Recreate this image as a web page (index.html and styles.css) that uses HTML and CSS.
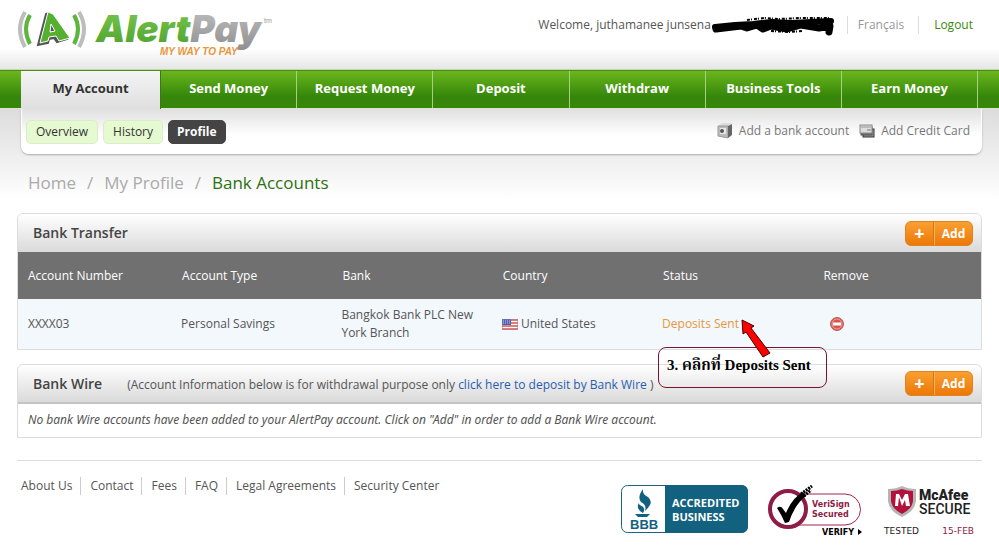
FILE: index.html
```html
<!DOCTYPE html>
<html lang="en">
<head>
  <meta charset="UTF-8">
  <title>AlertPay - Bank Accounts</title>
  <link rel="stylesheet" href="styles.css">
</head>
<body>
  <header class="header">
    <a href="#" class="logo">
      <svg width="260" height="54" viewBox="0 0 260 54" role="img" aria-label="AlertPay">
        <defs>
          <linearGradient id="green" x1="0" y1="0" x2="0" y2="1">
            <stop offset="0" stop-color="#7cc850"/>
            <stop offset="1" stop-color="#4aa02c"/>
          </linearGradient>
          <linearGradient id="grey" x1="0" y1="0" x2="0" y2="1">
            <stop offset="0" stop-color="#c0c0c0"/>
            <stop offset="1" stop-color="#8e8e8e"/>
          </linearGradient>
        </defs>
        <path d="M8 7Q-2 24 8 42" fill="none" stroke="#bdbdbd" stroke-width="4"/>
        <path d="M13 10Q5 24 13 39" fill="none" stroke="#5db53c" stroke-width="4"/>
        <path d="M62 7Q72 24 62 42" fill="none" stroke="#bdbdbd" stroke-width="4"/>
        <path d="M57 10Q65 24 57 39" fill="none" stroke="#5db53c" stroke-width="4"/>
        <path d="M29 9L32 8L50 34L40 37L37 33L32 34L31 38L21 40Z" fill="#555" stroke="#555" stroke-width="2"/>
        <path fill-rule="evenodd" d="M31 7L36 9L53 33L42 36L39 31L32 32L31 36L23 38ZM34 19L33 27L38 26Z" fill="#55b030" stroke="#fff" stroke-width="1"/>
        <text x="79" y="37" class="logo-name"><tspan fill="url(#green)">Alert</tspan><tspan fill="url(#grey)">Pay</tspan></text>
        <text x="143" y="50" class="logo-slogan">MY WAY TO PAY</text>
        <text x="247" y="18" class="logo-tm">tm</text>
      </svg>
    </a>
    <div class="user-bar">
      <span class="welcome">Welcome, juthamanee junsena
        <svg class="scribble" width="126" height="20" viewBox="0 0 126 20">
          <path d="M4 10L24 8L42 7L60 5L80 6L100 5L120 4" fill="none" stroke="#000" stroke-width="6" stroke-linecap="round"/>
          <path d="M5 12L30 9L36 11L46 8L52 12L60 9L76 12L90 8L108 11L119 9L118 15" fill="none" stroke="#000" stroke-width="7" stroke-linecap="round" stroke-linejoin="round"/>
          <path d="M36 3L44 2L54 1L68 2L90 1L118 1M60 14L78 15L92 14" fill="none" stroke="#000" stroke-width="2" stroke-dasharray="3 1 1 2"/>
        </svg>
      </span>
      <a href="#" class="language">Français</a>
      <a href="#" class="logout">Logout</a>
    </div>
  </header>

  <nav class="main-nav">
    <a href="#" class="nav-item active">My Account</a>
    <a href="#" class="nav-item">Send Money</a>
    <a href="#" class="nav-item">Request Money</a>
    <a href="#" class="nav-item">Deposit</a>
    <a href="#" class="nav-item">Withdraw</a>
    <a href="#" class="nav-item">Business Tools</a>
    <a href="#" class="nav-item">Earn Money</a>
  </nav>

  <div class="page">
    <div class="sub-nav">
      <div class="tabs">
        <a href="#" class="tab">Overview</a>
        <a href="#" class="tab">History</a>
        <a href="#" class="tab active">Profile</a>
      </div>
      <div class="shortcuts">
        <a href="#">
          <svg width="16" height="16" viewBox="0 0 16 16">
            <path d="M1 3L5 0H15L11 3Z" fill="#ddd"/>
            <path d="M1 3H11V15L1 13Z" fill="#bbb" stroke="#999"/>
            <path d="M11 3L15 1V12L11 15Z" fill="#666"/>
            <rect x="3" y="5" width="6" height="6" fill="#e8e8e8"/>
            <circle cx="5" cy="8" r="2" fill="#555"/>
          </svg>
          Add a bank account
        </a>
        <a href="#">
          <svg width="16" height="14" viewBox="0 0 16 14">
            <rect x="4" y="5" width="11" height="8" fill="#999" stroke="#333"/>
            <rect x="2" y="3" width="11" height="8" fill="#777" stroke="#555"/>
            <rect x="1" y="1" width="12" height="8" fill="#ddd" stroke="#888"/>
            <path d="M2 3H12" stroke="#999"/>
            <rect x="8" y="5" width="4" height="2" fill="#aaa"/>
          </svg>
          Add Credit Card
        </a>
      </div>
    </div>

    <div class="breadcrumb">
      <a href="#">Home</a>
      <span>/</span>
      <a href="#">My Profile</a>
      <span>/</span>
      <h1>Bank Accounts</h1>
    </div>

    <main class="content">
      <section class="panel">
        <div class="panel-head">
          <h2>Bank Transfer</h2>
          <button type="button" class="add-button"><span class="plus">+</span><span class="label">Add</span></button>
        </div>
        <table class="accounts">
          <thead>
            <tr>
              <th class="first">Account Number</th>
              <th>Account Type</th>
              <th>Bank</th>
              <th>Country</th>
              <th>Status</th>
              <th class="last">Remove</th>
            </tr>
          </thead>
          <tbody>
            <tr>
              <td>XXXX03</td>
              <td>Personal Savings</td>
              <td>Bangkok Bank PLC New York Branch</td>
              <td>
                <svg class="flag" width="16" height="11" viewBox="0 0 16 11">
                  <rect width="16" height="11" fill="#fff"/>
                  <path d="M0 1H16M0 4H16M0 7H16M0 10H16" stroke="#d9534a" stroke-width="1.5"/>
                  <rect width="9" height="6" fill="#4a63b5"/>
                  <path d="M1 2H9M1 4H9" stroke="#c5cdf0" stroke-dasharray="1 1"/>
                  <rect x=".5" y=".5" width="15" height="10" fill="none" stroke="#8a7fae" stroke-opacity=".5"/>
                </svg>
                United States
              </td>
              <td class="status">
                <a href="#">Deposits Sent</a>
                <div class="callout">3. คลิกที่ Deposits Sent</div>
                <svg class="arrow" width="30" height="40" viewBox="0 0 30 40">
                  <path d="M1 1L13 7L10 9L29 34L22 38L5 13L2 15Z" fill="#f00" stroke="#400"/>
                </svg>
              </td>
              <td>
                <button type="button" class="remove" aria-label="Remove">
                  <svg width="14" height="14" viewBox="0 0 14 14">
                    <circle cx="7" cy="7" r="6.5" fill="#d9534f" stroke="#b9625c"/>
                    <circle cx="7" cy="7" r="5" fill="none" stroke="#f0a09a"/>
                    <rect x="3" y="5.5" width="8" height="3" fill="#fff"/>
                  </svg>
                </button>
              </td>
            </tr>
          </tbody>
        </table>
      </section>

      <section class="panel">
        <div class="panel-head wire">
          <h2>Bank Wire</h2>
          <p>(Account Information below is for withdrawal purpose only <a href="#">click here to deposit by Bank Wire</a> )</p>
          <button type="button" class="add-button"><span class="plus">+</span><span class="label">Add</span></button>
        </div>
        <p class="empty">No bank Wire accounts have been added to your AlertPay account. Click on "Add" in order to add a Bank Wire account.</p>
      </section>
    </main>

    <footer class="footer">
      <div class="footer-links">
        <a href="#">About Us</a>
        <a href="#">Contact</a>
        <a href="#">Fees</a>
        <a href="#">FAQ</a>
        <a href="#">Legal Agreements</a>
        <a href="#">Security Center</a>
      </div>
      <div class="seals">
        <svg width="127" height="48" viewBox="0 0 127 48">
          <rect x=".5" y=".5" width="126" height="47" rx="6" fill="#fff" stroke="#1b6480"/>
          <path d="M44 0H120Q127 0 127 7V41Q127 48 120 48H44Z" fill="#12627f"/>
          <path d="M22 4Q21 9 27 12Q33 17 26 24L24 26Q26 20 20 17Q16 12 22 4ZM18 17Q17 20 21 21Q25 24 22 28Q16 25 17 20Z" fill="#12627f"/>
          <path d="M14 29H29L26 32H17Z" fill="#12627f"/>
          <text x="9" y="44" class="bbb">BBB</text>
          <text x="51" y="22" class="seal-title">ACCREDITED</text>
          <text x="51" y="36" class="seal-title">BUSINESS</text>
        </svg>
        <svg width="96" height="56" viewBox="0 0 96 56">
          <path d="M30 9H77A15 15 0 0 1 77 40H30" fill="#fff" stroke="#a5234f"/>
          <circle cx="20" cy="24" r="18" fill="#fff" stroke="#8d1c46" stroke-width="4"/>
          <path d="M9 23Q13 20 15 24L18 28Q24 13 35 7L38 11Q27 19 21 37L17 38Q13 29 9 23Z" fill="#000"/>
          <path d="M33 9L44 1M36 11L43 5" fill="none" stroke="#000" stroke-width="3" stroke-dasharray="2 1"/>
          <text x="44" y="22" class="verisign">VeriSign</text>
          <text x="44" y="32" class="verisign">Secured</text>
          <text x="54" y="50" class="verify">VERIFY</text>
          <path d="M90 44L94 47L90 50Z" fill="#000"/>
        </svg>
        <div class="mcafee">
          <svg width="90" height="34" viewBox="0 0 90 34">
            <path d="M4 4Q12 4 18 1Q24 4 32 4V16Q31 26 18 32Q5 26 4 16Z" fill="#b5b5b5"/>
            <path d="M7 6Q13 6 18 4Q23 6 29 6V16Q28 24 18 29Q8 24 7 16Z" fill="#b3123c"/>
            <path d="M11 21L12 9H15L18 15L21 9H24L26 21H22L21 15L18 21L15 12L14 21Z" fill="#fff"/>
            <text x="35" y="15" class="mcafee-name">McAfee</text>
            <text x="35" y="29" class="mcafee-secure">SECURE</text>
          </svg>
          <div class="tested"><span>TESTED</span><span class="date">15-FEB</span></div>
        </div>
      </div>
    </footer>
  </div>
</body>
</html>
```

FILE: styles.css
```css
* {
  box-sizing: border-box;
}
body {
  margin: 0;
  background: #fff;
  font-family: "Trebuchet MS", "Open Sans", "Noto Sans", sans-serif;
  font-size: 12px;
  line-height: 18px;
  color: #555;
}
a {
  color: inherit;
  text-decoration: none;
}
h1,
h2,
p {
  margin: 0;
}
button {
  padding: 0;
  border: none;
  background: none;
  font: inherit;
  cursor: pointer;
}

/* header */
.header {
  display: flex;
  justify-content: space-between;
  height: 70px;
  padding: 5px 26px 0 17px;
  background: linear-gradient(#fff 70%, #e6e6e6);
  border-bottom: 1px solid #c5d8b0;
}
.logo-name {
  font: italic 900 37px Inter, sans-serif;
}
.logo-slogan {
  font: italic 700 10px "Liberation Sans", sans-serif;
  fill: #e8963a;
}
.logo-tm {
  font: 7px "Liberation Sans", sans-serif;
  fill: #999;
}
.user-bar {
  display: flex;
  align-items: flex-start;
  padding-top: 11px;
}
.welcome {
  position: relative;
  margin-right: 136px;
}
.scribble {
  position: absolute;
  left: 100%;
  top: 1px;
}
.language {
  padding: 0 14px 0 10px;
  border-left: 1px solid #ddd;
  border-right: 1px solid #ddd;
  color: #999;
}
.logout {
  padding-left: 15px;
  color: #3a8a10;
}

/* main navigation */
.main-nav {
  display: flex;
  height: 39px;
  padding: 0 21px;
  background: linear-gradient(#6ab61c, #35860a 70%);
  border-top: 1px solid #4c8a1a;
  border-bottom: 1px solid #dce8cc;
}
.nav-item {
  flex: 1;
  padding-top: 8px;
  border-right: 1px solid #a8d080;
  color: #fff;
  font-size: 13px;
  font-weight: 700;
  text-align: center;
}
.nav-item.active {
  flex: 0 0 140px;
  height: 38px;
  background: linear-gradient(#f4f4f4, #dfdfdf);
  border-right-color: #3a7a10;
  color: #333;
}

.page {
  padding: 0 17px;
  background: linear-gradient(#dcdcdc, #fff 90px);
}
.sub-nav {
  display: flex;
  justify-content: space-between;
  align-items: flex-start;
  height: 45px;
  margin: 0 0 0 4px;
  padding: 11px 11px 0 4px;
  background: linear-gradient(#e0e0e0, #fff 26px);
  border: 1px solid #fff;
  border-top: none;
  border-radius: 0 0 8px 8px;
  box-shadow: 0 1px 2px #aaa;
}
.tabs {
  display: flex;
  gap: 5px;
}
.tab {
  padding: 2px 9px;
  background: #e6fad2;
  border: 1px solid #dcecc8;
  border-radius: 5px;
  line-height: 18px;
  color: #333;
}
.tab.active {
  padding: 2px 8px;
  background: #444;
  border-color: #444;
  color: #fff;
  font-weight: 700;
}
.shortcuts {
  display: flex;
  gap: 10px;
  padding-top: 2px;
  color: #777;
}
.shortcuts a {
  display: flex;
  align-items: center;
  gap: 6px;
}

.breadcrumb {
  display: flex;
  gap: 11px;
  padding: 17px 11px 18px;
  font-size: 17px;
  line-height: 24px;
  color: #aaa;
}
.breadcrumb h1 {
  font-size: 17px;
  font-weight: 400;
  color: #2f7010;
}

/* panels */
.content {
  display: flex;
  flex-direction: column;
  gap: 14px;
}
.panel {
  border: 1px solid #ddd;
  border-radius: 6px 6px 0 0;
}
.panel-head {
  display: flex;
  align-items: center;
  height: 38px;
  padding: 0 8px 0 15px;
  background: linear-gradient(#fff, #dadada);
  border-radius: 6px 6px 0 0;
}
.panel-head.wire {
  height: 39px;
  border-bottom: 2px solid #c4c4c4;
}
.panel-head h2 {
  font-size: 14px;
  font-weight: 600;
  line-height: 20px;
  color: #444;
}
.panel-head p {
  padding: 3px 0 0 25px;
}
.panel-head p a {
  color: #2a5db0;
}
.add-button {
  display: flex;
  width: 68px;
  height: 25px;
  margin-left: auto;
  background: linear-gradient(#f9a032, #ec7808);
  border: 1px solid #e0821e;
  border-radius: 6px;
  color: #fff;
  font-weight: 700;
  line-height: 23px;
}
.add-button .plus {
  flex: 0 0 28px;
  border-right: 1px solid #d8760f;
  font-size: 18px;
}
.add-button .label {
  flex: 1;
  border-left: 1px solid #fbb45c;
}

.accounts {
  width: 100%;
  border-collapse: collapse;
  table-layout: fixed;
}
.accounts th {
  height: 47px;
  padding: 0 10px;
  background: #707070;
  color: #fff;
  font-weight: 400;
  text-align: left;
}
.accounts th.first {
  width: 16%;
}
.accounts th.last {
  width: 17.4%;
}
.accounts td {
  height: 50px;
  padding: 0 14px 0 9px;
  background: #f3f8fd;
}
.accounts td:first-child {
  padding-left: 10px;
}
.flag {
  vertical-align: middle;
}
.accounts .status {
  position: relative;
  padding-right: 0;
}
.status a {
  color: #e8963a;
}
.callout {
  position: absolute;
  left: 5px;
  top: 48px;
  z-index: 1;
  width: 169px;
  height: 41px;
  padding: 7px 8px;
  border: 1px solid #7a1530;
  border-radius: 8px;
  font-family: "Liberation Serif", "Noto Serif Thai", "Norasi", "Kinnari", serif;
  font-size: 15px;
  font-weight: 700;
  line-height: 20px;
  white-space: nowrap;
  color: #000;
}
.arrow {
  position: absolute;
  left: 88px;
  top: 20px;
  z-index: 2;
}
.remove {
  display: block;
  width: 14px;
  height: 14px;
  margin-left: 8px;
}
.remove svg {
  display: block;
}
.empty {
  padding: 7px 10px 8px;
  font-family: "Trebuchet MS", "Noto Sans", sans-serif;
  font-style: italic;
}

/* footer */
.footer {
  display: flex;
  justify-content: space-between;
  margin-top: 22px;
  padding: 16px 8px 0 4px;
  border-top: 1px solid #ddd;
}
.footer-links {
  display: flex;
}
.footer-links a {
  height: 18px;
  padding-right: 8px;
  margin-right: 9px;
  border-right: 1px solid #ccc;
}
.footer-links a:last-child {
  border-right: none;
}
.seals {
  display: flex;
  gap: 20px;
  padding-top: 8px;
}
.seals svg {
  display: block;
}
.bbb {
  font: 700 13px "Liberation Sans", sans-serif;
  fill: #12627f;
}
.seal-title {
  font: 700 11px "Open Sans", sans-serif;
  fill: #fff;
}
.verisign {
  font: 700 8px "DejaVu Sans", sans-serif;
  fill: #8d1c46;
}
.verify {
  font: 700 8px "DejaVu Sans", sans-serif;
}
.mcafee {
  width: 90px;
}
.mcafee-name {
  font: 900 14px Roboto, sans-serif;
  fill: #222;
}
.mcafee-secure {
  font: 500 14px Roboto, sans-serif;
  fill: #222;
}
.tested {
  display: flex;
  justify-content: space-between;
  margin-top: 6px;
  font-family: "DejaVu Sans", sans-serif;
  font-size: 9px;
  line-height: 12px;
  color: #222;
}
.tested .date {
  color: #8d1c46;
}
```
